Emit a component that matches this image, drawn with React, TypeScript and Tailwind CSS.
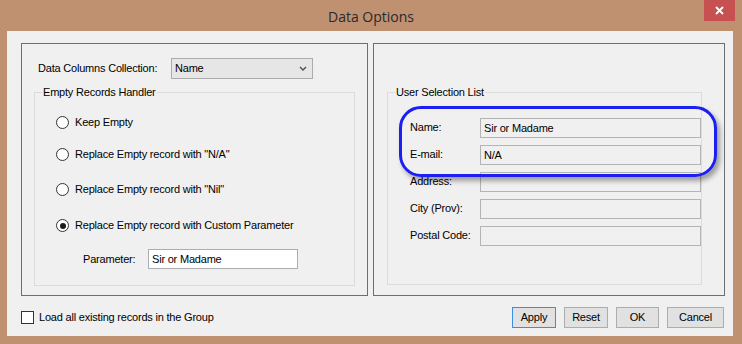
import React from "react";

function Radio({ checked }: { checked?: boolean }) {
  return (
    <div className="w-[13px] h-[13px] rounded-full border border-[#333333] bg-white flex items-center justify-center shrink-0">
      {checked && <div className="w-[6px] h-[6px] rounded-full bg-[#1a1a1a]" />}
    </div>
  );
}

function RadioRow({ label, checked, mt }: { label: string; checked?: boolean; mt: string }) {
  return (
    <div className={`flex items-center h-[13px] ml-[21px] ${mt}`}>
      <Radio checked={checked} />
      <span className="ml-[6px] leading-none">{label}</span>
    </div>
  );
}

function FieldRow({ label, value, mt }: { label: string; value?: string; mt: string }) {
  return (
    <div className={`flex items-center h-[20px] ${mt}`}>
      <span className="w-[70px] ml-[22px] -mt-[2px]">{label}</span>
      <div className="w-[221px] h-[20px] border border-[#b4b4b4] bg-[#f0f0f0] flex items-center pl-[3px]">
        {value}
      </div>
    </div>
  );
}

function Btn({ label, w, focused }: { label: string; w: string; focused?: boolean }) {
  return (
    <div
      className={`${w} h-[21px] flex items-center justify-center bg-[#e1e1e1] border ${
        focused ? "border-[#3c8fe0]" : "border-[#adadad]"
      }`}
    >
      {label}
    </div>
  );
}

export default function App() {
  return (
    <div className="w-[742px] h-[344px] bg-[#bf9171] flex flex-col font-['Liberation_Sans',Arial,sans-serif] text-[11px] tracking-[-0.2px] text-black overflow-hidden">
      <div className="h-[31px] relative flex items-center justify-center shrink-0">
        <span className="font-['Open_Sans',sans-serif] text-[14px] tracking-normal text-[#2a2a2a] mt-[1px]">Data Options</span>
        <div className="absolute left-[704px] top-0 w-[31px] h-[21px] bg-[#c75050] flex items-center justify-center">
          <svg width="9" height="9" viewBox="0 0 9 9">
            <path d="M1 1 L8 8 M8 1 L1 8" stroke="white" strokeWidth="1.8" />
          </svg>
        </div>
      </div>
      <div className="ml-[7px] w-[726px] h-[305px] bg-[#f0f0f0] flex flex-col shrink-0">
        <div className="flex mt-[12px] ml-[14px] gap-[5px]">
          {/* Left panel */}
          <div className="w-[347px] h-[253px] border border-[#6e6e6e] flex flex-col">
            <div className="flex items-center mt-[14px] h-[21px]">
              <span className="pl-[16px] w-[149px]">Data Columns Collection:</span>
              <div className="w-[142px] h-[21px] border border-[#acacac] bg-[#e6e6e6] flex items-center justify-between pl-[3px] pr-[5px]">
                <span>Name</span>
                <svg width="8" height="6" viewBox="0 0 8 6">
                  <path d="M1 1 L4 4 L7 1" stroke="#555" strokeWidth="1.5" fill="none" />
                </svg>
              </div>
            </div>
            <div className="relative mt-[13px] ml-[12px] w-[321px] h-[194px] border border-[#dcdcdc] flex flex-col">
              <span className="absolute -top-[7px] left-[7px] px-[1px] bg-[#f0f0f0] leading-[13px]">
                Empty Records Handler
              </span>
              <RadioRow label="Keep Empty" mt="mt-[23px]" />
              <RadioRow label={'Replace Empty record with "N/A"'} mt="mt-[19px]" />
              <RadioRow label={'Replace Empty record with "Nil"'} mt="mt-[22px]" />
              <RadioRow label="Replace Empty record with Custom Parameter" checked mt="mt-[23px]" />
              <div className="flex items-center mt-[17px] ml-[48px] h-[20px]">
                <span className="w-[65px]">Parameter:</span>
                <div className="w-[150px] h-[20px] border border-[#abadb3] bg-white flex items-center pl-[3px]">
                  Sir or Madame
                </div>
              </div>
            </div>
          </div>
          {/* Right panel */}
          <div className="relative w-[352px] h-[253px] border border-[#6e6e6e] flex flex-col">
            <div className="relative mt-[48px] ml-[13px] w-[315px] h-[193px] border border-[#dcdcdc] flex flex-col">
              <span className="absolute -top-[7px] left-[7px] px-[1px] bg-[#f0f0f0] leading-[13px]">
                User Selection List
              </span>
              <FieldRow label="Name:" value="Sir or Madame" mt="mt-[25px]" />
              <FieldRow label="E-mail:" value="N/A" mt="mt-[7px]" />
              <FieldRow label="Address:" mt="mt-[7px]" />
              <FieldRow label="City (Prov):" mt="mt-[7px]" />
              <FieldRow label="Postal Code:" mt="mt-[7px]" />
            </div>
            <div className="absolute left-[25px] top-[62px] w-[318px] h-[71px] rounded-[22px] border-[3px] border-[#1c1ff2] shadow-[3px_4px_5px_rgba(0,0,0,0.35)]" />
          </div>
        </div>
        <div className="flex items-start mt-[11px] h-[21px] ml-[14px] mr-[9px]">
          <div className="flex items-center mt-[2px]">
            <div className="w-[13px] h-[13px] border border-[#333333] bg-white" />
            <span className="ml-[5px]">Load all existing records in the Group</span>
          </div>
          <div className="ml-auto flex gap-[8px]">
            <Btn label="Apply" w="w-[44px]" focused />
            <Btn label="Reset" w="w-[44px]" />
            <Btn label="OK" w="w-[43px]" />
            <Btn label="Cancel" w="w-[57px]" />
          </div>
        </div>
      </div>
    </div>
  );
}
